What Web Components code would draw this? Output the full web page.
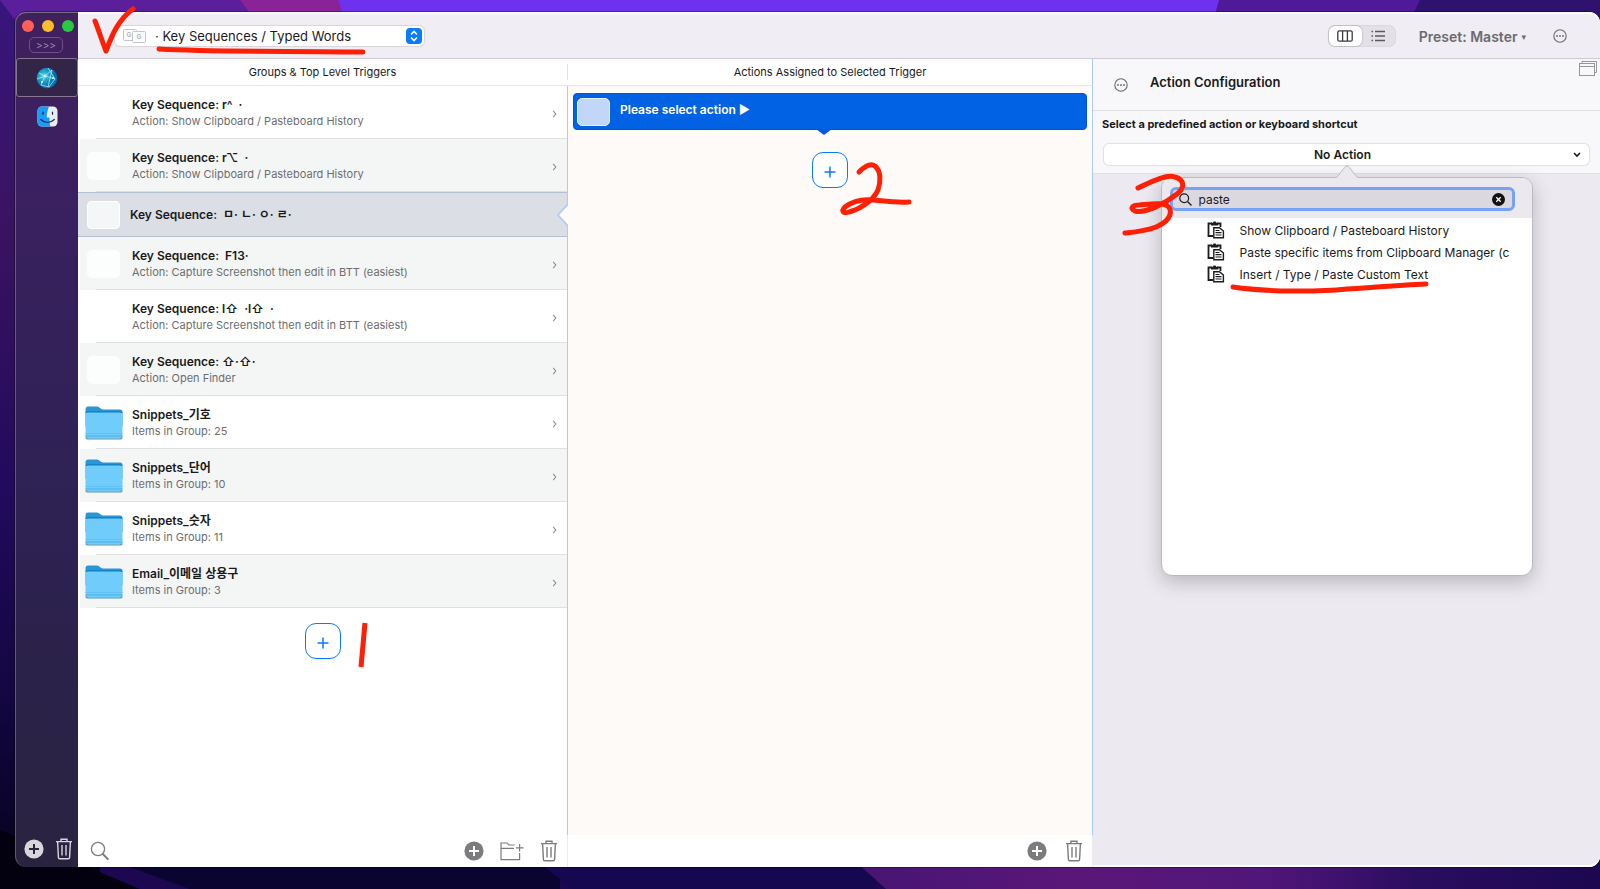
<!DOCTYPE html>
<html lang="en">
<head>
<meta charset="utf-8">
<meta name="viewport" content="width=device-width, initial-scale=1">
<title>Key Sequences / Typed Words</title>
<style>
  html, body {
    margin: 0;
    height: 100%;
  }
  body {
    font-family: Inter, "Noto Sans CJK KR", "DejaVu Sans", sans-serif;
    font-size: 12px;
    line-height: 17px;
    color: #1a1a1c;
    --blue: #0a7aff;
    --line: #e0e0e2;
    --split: #a9cbfa;
    --ink: #ff1f05;
  }
</style>
</head>
<body>
<desk-top>
  <app-window>
    <side-bar slot="side"></side-bar>
    <tool-bar slot="toolbar"></tool-bar>
    <trigger-column>
      <trigger-row sub="Action: Show Clipboard / Pasteboard History">Key Sequence: r^ &nbsp;·</trigger-row>
      <trigger-row icon="blank" sub="Action: Show Clipboard / Pasteboard History">Key Sequence: r⌥ &nbsp;·</trigger-row>
      <trigger-row icon="blank" selected>Key Sequence: &nbsp;ㅁ· ㄴ· ㅇ· ㄹ·</trigger-row>
      <trigger-row icon="blank" sub="Action: Capture Screenshot then edit in BTT (easiest)">Key Sequence: &nbsp;F13·</trigger-row>
      <trigger-row sub="Action: Capture Screenshot then edit in BTT (easiest)">Key Sequence: l⇧ &nbsp;·l⇧ &nbsp;·</trigger-row>
      <trigger-row icon="blank" sub="Action: Open Finder">Key Sequence: ⇧·⇧·</trigger-row>
      <trigger-row icon="folder" sub="Items in Group: 25">Snippets_기호</trigger-row>
      <trigger-row icon="folder" sub="Items in Group: 10">Snippets_단어</trigger-row>
      <trigger-row icon="folder" sub="Items in Group: 11">Snippets_숫자</trigger-row>
      <trigger-row icon="folder" sub="Items in Group: 3">Email_이메일 상용구</trigger-row>
    </trigger-column>
    <action-column></action-column>
    <config-column></config-column>
  </app-window>
</desk-top>

<script>
const icons = {
  plus: `<svg width="20" height="20" viewBox="0 0 20 20"><circle cx="10" cy="10" r="9.6" fill="currentColor"/><path d="M10 5v10M5 10h10" stroke="var(--hole, #fff)" stroke-width="2"/></svg>`,
  trash: `<svg width="18" height="22" viewBox="0 0 18 22" fill="none" stroke="currentColor" stroke-width="1.4"><path d="M1 3.6h16M6 3.4V1.2h6v2.2M2.6 3.8l.8 15.4c0 1 .5 1.6 1.4 1.6h8.4c.9 0 1.4-.6 1.4-1.6l.8-15.4M7 7v10.6M11 7v10.6"/></svg>`,
  search: `<svg width="20" height="20" viewBox="0 0 20 20" fill="none" stroke="currentColor"><circle cx="8" cy="8" r="6.6" stroke-width="1.3"/><path d="M12.6 12.8l5.8 5.8" stroke-width="2"/></svg>`,
  newFolder: `<svg width="24" height="20" viewBox="0 0 24 20" fill="none" stroke="currentColor" stroke-width="1.2"><path d="M14.500 4H9L7.4 2H1v16.6h18.6V12M1 7.4h13"/><path d="M19.6 3v7.500M16 6.800h7.500"/></svg>`,
  chevron: `<svg width="6" height="8" viewBox="0 0 6 8" fill="none" stroke="#8c8c8e" stroke-width="1.1"><path d="M1.2 .8l2.6 3.2-2.6 3.2"/></svg>`,
  folder: `<svg width="38" height="34" viewBox="0 0 38 34"><path d="M.5 3.500C.5 1.700 1.500.5 3 .5h9c2.500 0 3.500 3 6 3h17c1.800 0 2.500 1 2.500 2.800V20H.5z" fill="#2b96d4"/><path d="M.5 7c0-1 .9-1.800 2.500-1.800h32c1.600 0 2.500.8 2.500 1.800z" fill="#0b7cc8"/><path d="M.5 8.500c0-1.2.9-2 2.500-2h32c1.600 0 2.500.8 2.500 2v21.6c0 1.8-.9 2.7-2.5 2.7H3C1.400 32.800.5 31.900.5 30.100z" fill="#70cdfb"/><path d="M.6 27.500h36.800" stroke="#62c2f3"/><path d="M.6 30h36.800" stroke="#5bbdf0" stroke-width="2"/><path d="M.8 31.500c.3 1 1 1.500 2.200 1.500h32c1.200 0 1.900-.5 2.200-1.500" fill="none" stroke="#5a93b3" stroke-width="1.200"/></svg>`,
  more: `<svg width="14" height="14" viewBox="0 0 14 14"><circle cx="7" cy="7" r="6.200" fill="none" stroke="currentColor" stroke-width="1.100"/><g fill="currentColor"><circle cx="4" cy="7" r=".9"/><circle cx="7" cy="7" r=".9"/><circle cx="10" cy="7" r=".9"/></g></svg>`,
  columns: `<svg width="16" height="12" viewBox="0 0 16 12" fill="none" stroke="#3a3a3c" stroke-width="1.300"><rect x=".8" y=".8" width="14.400" height="10.400" rx="1.500"/><path d="M5.600 1v10M10.400 1v10"/></svg>`,
  list: `<svg width="14" height="12" viewBox="0 0 14 12" stroke="#5a5a5c" stroke-width="1.300"><path d="M4 1.500h10M4 6h10M4 10.500h10M.5 1.500H2M.5 6H2M.5 10.500H2"/></svg>`,
  keycaps: `<svg width="23" height="15" viewBox="0 0 23 15" font-size="6" fill="#8f8f93" text-anchor="middle"><rect x=".5" y=".5" width="13" height="11" rx="1" fill="#fbfbfb" stroke="#c4c4c8"/><rect x="9.500" y="2.500" width="13" height="11" rx="1" fill="#fbfbfb" stroke="#c4c4c8"/><text x="6" y="8">G</text><text x="16" y="10">G</text></svg>`,
  updown: `<svg width="16" height="16" viewBox="0 0 16 16"><rect width="16" height="16" rx="4" fill="#0a7aff"/><path d="M5 6.500l3-3 3 3M5 9.500l3 3 3-3" fill="none" stroke="#fff" stroke-width="1.600"/></svg>`,
  windows: `<svg width="18" height="15" viewBox="0 0 18 15" fill="none" stroke="#96969a"><path d="M3 2V.5h14.500v11H16"/><rect x=".5" y="2.500" width="15" height="12"/><path d="M.5 5.500h15" /></svg>`,
  paste: `<svg width="18" height="18" viewBox="0 0 18 18"><path d="M6 15H1.500V2.500H5M10 2.500h3.500V6" fill="none" stroke="#1c1c1e" stroke-width="1.800"/><path d="M4 4.600V1.800h2L6.600.4h2l.6 1.400h2v2.800z" fill="#1c1c1e"/><path d="M6.800 6.800h5.600L16.400 10v6.800H6.800z" fill="#fff" stroke="#1c1c1e" stroke-width="1.400"/><path d="M8.500 9.500h4M8.500 11.700h6M8.500 14h6" stroke="#1c1c1e" stroke-width="1.200"/></svg>`,
  globe: `<svg width="22" height="22" viewBox="0 0 22 22"><defs><radialGradient id="g" cx=".35" cy=".4"><stop offset="0" stop-color="#4fd8ea"/><stop offset=".5" stop-color="#1fa3cc"/><stop offset="1" stop-color="#0b6fae"/></radialGradient></defs><circle cx="11" cy="11" r="10.300" fill="url(#g)"/><path d="M3 6l6 3 7-6M9 9l-4 9M9 9l10 3-6 8M5 18l8 2M1 12l8-3M12 1l7 11M16 3l-4 17" fill="none" stroke="#a5eef2" stroke-width=".8"/><circle cx="9" cy="9" r="1.400" fill="#e9ffff"/><circle cx="6" cy="15" r="1" fill="#e9ffff"/><circle cx="17" cy="11" r="1" fill="#e9ffff"/></svg>`,
  finder: `<svg width="21" height="21" viewBox="0 0 21 21"><rect x=".5" y=".5" width="20" height="20" rx="4.500" fill="#e9eef5"/><path d="M5 .5h7C10.500 4 9.700 8 9.700 11.500h2.800c0 3.500.2 6 .8 9H5A4.500 4.500 0 01.5 16V5A4.500 4.500 0 015 .5z" fill="#1a9bf7"/><path d="M6 6v2.200M15.500 6v2.200M3.800 13.500c4 4 9.500 4 13.500 0" fill="none" stroke="#12304f" stroke-width="1.200" stroke-linecap="round"/></svg>`
};

// rules that every control in a shadow root needs
const reset = `
  * { box-sizing: border-box; }
  button, select, input { font: inherit; color: inherit; margin: 0; border: 0; padding: 0; background: none; }
  button { display: inline-flex; align-items: center; justify-content: center; cursor: pointer; }
  svg { display: block; flex: none; }
`;

class BaseElement extends HTMLElement {
  connectedCallback() {
    if (this.shadowRoot) return;
    this.attachShadow({ mode: 'open' });
    this.shadowRoot.innerHTML = `<style>${reset}</style>${this.render()}`;
  }
}

class DeskTop extends BaseElement {
  render() {
    return `
      <style>
        :host {
          display: flex;
          position: relative;
          min-height: 100vh;
          box-sizing: border-box;
          padding: 12px 0 22px 15px;
          overflow: hidden;
          background: #12063c;
        }
        .wallpaper {
          position: absolute;
          inset: 0;
          width: 100%;
          height: 100%;
        }
        ::slotted(*) { flex: 1; position: relative; }
      </style>
      <svg class="wallpaper" viewBox="0 0 1600 889" preserveAspectRatio="none">
        <defs>
          <linearGradient id="left" x1="0" y1="0" x2="0" y2="1">
            <stop offset="0" stop-color="#37157d"/><stop offset=".25" stop-color="#3a1360"/>
            <stop offset=".55" stop-color="#220a5c"/><stop offset=".8" stop-color="#12063f"/><stop offset="1" stop-color="#05021a"/>
          </linearGradient>
          <linearGradient id="bottom">
            <stop offset="0" stop-color="#471573"/><stop offset=".3" stop-color="#5a1778"/>
            <stop offset=".55" stop-color="#51167a"/><stop offset=".75" stop-color="#2b0d60"/><stop offset="1" stop-color="#1c0750"/>
          </linearGradient>
        </defs>
        <path d="M0 0h1600v889H0z" fill="#1c0750"/>
        <path d="M0 0h100v889H0z" fill="url(#left)"/>
        <path d="M0 0h260l30 40H30z" fill="#5c1f9c"/>
        <path d="M240 0h100l20 40H270z" fill="#8a2298"/>
        <path d="M338 0h890l-12 40H352z" fill="#6e31ee"/>
        <path d="M1219 0h203l-24 40h-190z" fill="#4f1a98"/>
        <path d="M1420 0h180v40h-200z" fill="#2f126e"/>
        <path d="M0 830l140 59H0z" fill="#03010f"/>
        <path d="M110 860h450v29H190z" fill="#0a0430"/>
        <path d="M536 860h340v29H572z" fill="#160850"/>
        <path d="M854 860h746v29H886z" fill="url(#bottom)"/>
      </svg>
      <slot></slot>`;
  }
}

class AppWindow extends BaseElement {
  render() {
    return `
      <style>
        :host {
          display: flex;
          border-radius: 11px;
          box-shadow: 0 0 0 1px rgba(0, 0, 0, .3);
        }
        .main {
          flex: 1;
          min-width: 0;
          display: flex;
          flex-direction: column;
          background: #fff;
          border-radius: 0 11px 11px 0;
        }
        .columns {
          flex: 1;
          display: grid;
          grid-template-columns: 490fr 525fr 507fr;
        }
      </style>
      <slot name="side"></slot>
      <div class="main">
        <slot name="toolbar"></slot>
        <div class="columns"><slot></slot></div>
      </div>`;
  }
}

class SideBar extends BaseElement {
  render() {
    return `
      <style>
        :host {
          display: flex;
          flex-direction: column;
          width: 63px;
          box-sizing: border-box;
          flex: none;
          border-radius: 11px 0 0 11px;
          border-left: 1px solid rgba(255, 255, 255, .25);
          border-top: 1px solid rgba(255, 255, 255, .35);
          background: linear-gradient(#41205e, #3a2060 20%, #2d2252 60%, #29233f);
        }
        .lights { display: flex; gap: 8px; padding: 7px 5px 5px 6px; }
        .lights button { width: 12px; height: 12px; border-radius: 50%; flex: none; }
        .red { background: #ff5f57; }
        .amber { background: #febc2e; }
        .green { background: #28c840; }
        .expand {
          width: 34px;
          height: 16px;
          margin: 0 0 5px 13px;
          border: 1px solid #6b5284;
          border-radius: 5px;
          color: #9d8bb0;
          font-size: 10px;
          line-height: 14px;
        }
        .app { width: 100%; height: 39px; }
        .app[aria-pressed=true] {
          background: #332548;
          border: 1px solid #85778f;
          border-radius: 3px;
        }
        .bottom {
          margin-top: auto;
          display: flex;
          align-items: center;
          justify-content: space-between;
          padding: 0 5px 7px 8px;
          color: #d9d5dd;
          --hole: #29233f;
        }
      </style>
      <div class="lights">
        <button class="red" aria-label="Close"></button>
        <button class="amber" aria-label="Minimize"></button>
        <button class="green" aria-label="Zoom"></button>
      </div>
      <button class="expand">&gt;&gt;&gt;</button>
      <button class="app" aria-pressed="true" aria-label="For all apps">${icons.globe}</button>
      <button class="app" aria-label="Finder">${icons.finder}</button>
      <div class="bottom">
        <button aria-label="Add app">${icons.plus}</button>
        <button aria-label="Remove app">${icons.trash}</button>
      </div>`;
  }
}

// hand-drawn red stroke laid over the element it belongs to
class InkMark extends BaseElement {
  render() {
    return `
      <style>
        :host { position: absolute; z-index: 5; pointer-events: none; }
        svg { overflow: visible; }
      </style>
      <svg width="1" height="1" fill="none" stroke="var(--ink)" stroke-width="${this.getAttribute('weight') || 5}"
        stroke-linecap="${this.getAttribute('cap') || 'round'}" stroke-linejoin="round"><path d="${this.getAttribute('d')}"/></svg>`;
  }
}

class ToolBar extends BaseElement {
  render() {
    return `
      <style>
        :host {
          display: flex;
          align-items: center;
          position: relative;
          height: 47px;
          box-sizing: border-box;
          padding: 0 33px 0 37px;
          background: #f0edf4;
          border-top: 2px solid #fbfafc;
          border-bottom: 1px solid #cfcbd4;
          border-radius: 0 11px 0 0;
          color: #6b6a6f;
        }
        .kind {
          display: grid;
          align-items: center;
          width: 309px;
          height: 20px;
          border-radius: 5px;
          background: #fff;
          box-shadow: 0 0 1px 1px rgba(0, 0, 0, .1);
          color: #1a1a1c;
        }
        .kind > * { grid-area: 1 / 1; }
        .kind select { appearance: none; padding: 0 24px 0 40px; height: 20px; font-size: 13px; width: 100%; }
        .kind .caps { padding-left: 8px; }
        .kind .arrows { justify-self: end; padding-right: 2px; pointer-events: none; }
        .view {
          display: flex;
          margin-left: auto;
          border-radius: 6px;
          background: #e4e0e8;
          box-shadow: 0 0 0 1px #dcd8e0;
        }
        .view button { width: 33px; height: 20px; border-radius: 6px; }
        .view [aria-pressed=true] { background: #fff; box-shadow: 0 0 1px 1px rgba(0, 0, 0, .12); }
        .preset { margin: 0 27px 0 24px; font-size: 14px; font-weight: 600; gap: 4px; }
        .preset small { font-size: 9px; }
        .tick { left: 12px; top: -9px; }
        .rule { left: 76px; top: 32px; }
      </style>
      <label class="kind">
        <span class="caps">${icons.keycaps}</span>
        <select aria-label="Trigger type"><option>· Key Sequences / Typed Words</option></select>
        <span class="arrows">${icons.updown}</span>
      </label>
      <div class="view">
        <button aria-pressed="true" aria-label="Columns">${icons.columns}</button>
        <button aria-label="List">${icons.list}</button>
      </div>
      <button class="preset">Preset: Master <small>▾</small></button>
      <button aria-label="More">${icons.more}</button>
      <ink-mark class="tick" d="M5 16C9 26 12 36 16 46C22 30 28 15 43 4"></ink-mark>
      <ink-mark class="rule" d="M5 3C60 6 120 5 209 6"></ink-mark>`;
  }
}

class ColumnHead extends BaseElement {
  render() {
    return `
      <style>
        :host {
          display: flex;
          align-items: center;
          height: 27px;
          box-sizing: border-box;
          border-bottom: 1px solid #e6e6e8;
          background: #fff;
          font-size: 11px;
        }
        h2 { flex: 1; margin: 0; font: inherit; text-align: center; }
        i { width: 1px; height: 16px; background: var(--line); }
      </style>
      <h2><slot></slot></h2>${this.hasAttribute('divided') ? '<i></i>' : ''}`;
  }
}

class ColumnFoot extends BaseElement {
  render() {
    return `
      <style>
        :host {
          display: flex;
          align-items: center;
          gap: 18px;
          height: 32px;
          box-sizing: border-box;
          padding: 0 9px 0 12px;
          border-right: 1px solid #ececee;
          background: #fff;
          color: #7c7c7e;
        }
        :host([groups]) { gap: 16px; }
        .find { margin-right: auto; }
      </style>
      ${this.hasAttribute('groups') ? `<button class="find" aria-label="Search">${icons.search}</button>` : '<span class="find"></span>'}
      <button aria-label="Add">${icons.plus}</button>
      ${this.hasAttribute('groups') ? `<button aria-label="New group">${icons.newFolder}</button>` : ''}
      <button aria-label="Delete">${icons.trash}</button>`;
  }
}

class AddButton extends BaseElement {
  render() {
    return `
      <style>
        :host { display: block; position: relative; width: 36px; margin: 0 auto; }
        button {
          width: 36px;
          height: 36px;
          padding-top: 4px;
          border: 1px solid var(--blue);
          border-radius: 11px;
          background: #fff;
          color: var(--blue);
        }
      </style>
      <button aria-label="Add"><svg width="12" height="12" viewBox="0 0 12 12" stroke="currentColor" stroke-width="1.500"><path d="M6 .5v11M.5 6h11"/></svg></button>
      <slot></slot>`;
  }
}

class TriggerColumn extends BaseElement {
  render() {
    return `
      <style>
        :host { display: flex; flex-direction: column; min-width: 0; }
        .body {
          flex: 1;
          border-right: 1px solid var(--split);
        }
        add-button { margin-top: 15px; }
        ink-mark { left: 50px; top: 0; }
      </style>
      <column-head divided>Groups &amp; Top Level Triggers</column-head>
      <div class="body">
        <div role="list"><slot></slot></div>
        <add-button><ink-mark cap="butt" d="M10 0L6 44"></ink-mark></add-button>
      </div>
      <column-foot groups></column-foot>`;
  }
}

class TriggerRow extends BaseElement {
  render() {
    this.setAttribute('role', 'listitem');
    const icon = this.getAttribute('icon');
    const sub = this.getAttribute('sub');
    const art = icon === 'folder' ? icons.folder : icon === 'blank' ? '<i class="blank"></i>' : '';
    return `
      <style>
        :host { display: block; position: relative; margin-left: 2px; }
        :host(:nth-of-type(even)) { background: #f4f6f6; }
        :host(:not([selected]))::after {
          content: "";
          position: absolute;
          inset: auto 0 0 16px;
          height: 1px;
          background: var(--line);
        }
        :host([selected]) { margin-left: 0; background: #dbdee4; border: solid #b3bfd3; border-width: 1px 0; }
        .row { display: flex; width: 100%; height: 53px; padding: 0 9px 0 5px; text-align: left; }
        :host([selected]) .row { height: 43px; padding-left: 7px; }
        .art { width: 40px; display: flex; align-items: center; justify-content: flex-start; }
        .blank {
          width: 33px;
          height: 28px;
          margin-left: 2px;
          border-radius: 5px;
          background: #fcfdfd;
        }
        :host([selected]) .blank { background: #f5f6f8; box-shadow: inset 0 0 0 1px #fff; }
        .text { flex: 1; min-width: 0; padding-left: 7px; }
        :host([selected]) .text { padding-left: 5px; }
        .title { display: block; font-weight: 600; white-space: pre; }
        .sub { display: block; font-size: 11px; color: #6d6d70; }
        .go { padding-top: 3px; }
        .notch { position: absolute; right: -1px; top: 50%; margin-top: -11px; }
      </style>
      <button class="row">
        <span class="art">${art}</span>
        <span class="text">
          <span class="title"><slot></slot></span>
          ${sub ? `<span class="sub">${sub}</span>` : ''}
        </span>
        ${sub ? `<span class="go">${icons.chevron}</span>` : ''}
      </button>
      ${this.hasAttribute('selected') ? `<svg class="notch" width="11" height="22" viewBox="0 0 11 22"><path d="M11 0L1 11l10 11" fill="#fefaf8" stroke="#a9cbfa" stroke-width="1.600"/></svg>` : ''}`;
  }
}

class ActionColumn extends BaseElement {
  render() {
    return `
      <style>
        :host { display: flex; flex-direction: column; min-width: 0; }
        column-head { border-right: 1px solid var(--split); }
        .body {
          flex: 1;
          padding: 7px 5px;
          border-right: 1px solid var(--split);
          background: #fefaf8;
        }
        .action {
          position: relative;
          width: 100%;
          height: 37px;
          margin-bottom: 22px;
          padding: 0 3px;
          justify-content: flex-start;
          align-items: flex-start;
          gap: 10px;
          border: 1px solid #0054dc;
          border-radius: 4px;
          background: #0163e4;
          color: #fff;
          font-weight: 600;
        }
        .action i {
          width: 33px;
          height: 28px;
          margin-top: 4px;
          border: 1px solid #e6effc;
          border-radius: 5px;
          background: #c2d6f8;
        }
        .action span { padding-top: 7px; }
        .action svg { position: absolute; left: 50%; top: 100%; margin-left: -14px; }
        ink-mark { left: 26px; top: 9px; }
      </style>
      <column-head>Actions Assigned to Selected Trigger</column-head>
      <div class="body">
        <button class="action"><i></i><span>Please select action ▶</span>
          <svg width="16" height="6" viewBox="0 0 16 6"><path d="M0 0h16L8 6z" fill="#0058e0"/></svg></button>
        <add-button><ink-mark d="M21 11C27 5 33 2 37 5C43 10 43 20 40 29C35 40 22 48 11 51C5 53 3 50 7 46C15 40 24 38 34 39C46 40 58 42 71 41"></ink-mark></add-button>
      </div>
      <column-foot></column-foot>`;
  }
}

class ConfigColumn extends BaseElement {
  render() {
    return `
      <style>
        :host {
          display: block;
          min-width: 0;
          background: #ece9f0;
          border-bottom: 2px solid #fff;
          border-radius: 0 0 11px 0;
        }
        header {
          display: flex;
          align-items: center;
          height: 52px;
          padding-left: 21px;
          background: #f8f8fa;
          border-bottom: 1px solid var(--line);
          color: #6b6a6f;
        }
        h1 { margin: 0 auto 4px 22px; font-size: 13px; font-weight: 600; color: #1a1a1c; }
        .detach { align-self: flex-start; margin: 2px 3px 0 0; }
        .pick {
          position: relative;
          padding: 5px 11px 8px;
          background: #f8f8fa;
          border-bottom: 1px solid var(--line);
        }
        .pick label { display: block; margin: 0 0 11px -2px; font-size: 11px; font-weight: 700; }
        .choice { display: grid; align-items: center; }
        .choice > * { grid-area: 1 / 1; }
        select {
          appearance: none;
          width: 100%;
          height: 21px;
          padding-right: 8px;
          border-radius: 5px;
          background: #fff;
          box-shadow: 0 0 1px 1px rgba(0, 0, 0, .1);
          font-weight: 600;
          text-align: center;
          text-align-last: center;
        }
        .choice svg { justify-self: end; margin-right: 8px; pointer-events: none; }
        action-picker { position: absolute; left: 50%; top: 100%; margin: 4px 0 0 -186px; z-index: 3; }
      </style>
      <header>
        <button aria-label="More">${icons.more}</button>
        <h1>Action Configuration</h1>
        <button class="detach" aria-label="Open in window">${icons.windows}</button>
      </header>
      <div class="pick">
        <label for="action">Select a predefined action or keyboard shortcut</label>
        <div class="choice">
          <select id="action"><option>No Action</option></select>
          <svg width="8" height="6" viewBox="0 0 8 6" fill="none" stroke="#1a1a1c" stroke-width="1.600"><path d="M1 1l3 3 3-3"/></svg>
        </div>
        <action-picker></action-picker>
      </div>`;
  }
}

class ActionPicker extends BaseElement {
  render() {
    const items = [
      'Show Clipboard / Pasteboard History',
      'Paste specific items from Clipboard Manager (c',
      'Insert / Type / Paste Custom Text'
    ];
    return `
      <style>
        :host {
          display: block;
          width: 372px;
          min-height: 399px;
          box-sizing: border-box;
          border: 1px solid #bcb9c0;
          border-radius: 11px;
          background: #fff;
          box-shadow: 0 6px 20px rgba(0, 0, 0, .22);
        }
        .tip { position: absolute; left: 50%; top: -13px; margin-left: -12px; }
        .top {
          padding: 9px 17px 7px 8px;
          border-radius: 10px 10px 0 0;
          background: #ebe8ee;
        }
        .field {
          display: flex;
          align-items: center;
          gap: 7px;
          height: 24px;
          padding: 0 7px 0 6px;
          border: 3px solid #76a3f5;
          border-radius: 6px;
          background: #dcd8e0;
        }
        input { flex: 1; min-width: 0; outline: 0; font-size: 12px; }
        ul { margin: 0; padding: 1px 18px 0 45px; list-style: none; }
        li { display: flex; }
        li button { height: 22px; gap: 15px; justify-content: flex-start; white-space: nowrap; }
        .three { left: -41px; top: -7px; }
        .rule { left: 65px; top: 103px; }
      </style>
      <svg class="tip" width="24" height="13" viewBox="0 0 24 13"><path d="M0 13c4-1 9-12 12-12s8 11 12 12" fill="#ebe8ee" stroke="#bcb9c0"/></svg>
      <div class="top">
        <div class="field">
          <svg width="13" height="13" viewBox="0 0 13 13" fill="none" stroke="#1a1a1c" stroke-width="1.200"><circle cx="5.200" cy="5.200" r="4.400"/><path d="M8.500 8.500l4 4"/></svg>
          <input type="text" value="paste" aria-label="Search actions">
          <button aria-label="Clear"><svg width="13" height="13" viewBox="0 0 13 13"><circle cx="6.500" cy="6.500" r="6.500" fill="#111"/><path d="M4.300 4.300l4.400 4.400M8.700 4.300L4.300 8.700" stroke="#fff" stroke-width="1.300"/></svg></button>
        </div>
      </div>
      <ul>
        ${items.map(item => `<li><button>${icons.paste}<span>${item}</span></button></li>`).join('')}
      </ul>
      <ink-mark class="three" d="M17 17C30 11 45 3 54 6C64 9 64 17 56 23C46 31 25 43 14 40C8 37 12 34 18 34C30 33 46 30 49 38C51 46 44 52 35 56C25 60 14 61 4 62"></ink-mark>
      <ink-mark class="rule" d="M6 6C40 11 90 11 120 8C150 6 175 4 199 3"></ink-mark>`;
  }
}

customElements.define('desk-top', DeskTop);
customElements.define('app-window', AppWindow);
customElements.define('side-bar', SideBar);
customElements.define('ink-mark', InkMark);
customElements.define('tool-bar', ToolBar);
customElements.define('column-head', ColumnHead);
customElements.define('column-foot', ColumnFoot);
customElements.define('add-button', AddButton);
customElements.define('trigger-column', TriggerColumn);
customElements.define('trigger-row', TriggerRow);
customElements.define('action-column', ActionColumn);
customElements.define('config-column', ConfigColumn);
customElements.define('action-picker', ActionPicker);
</script>
</body>
</html>
